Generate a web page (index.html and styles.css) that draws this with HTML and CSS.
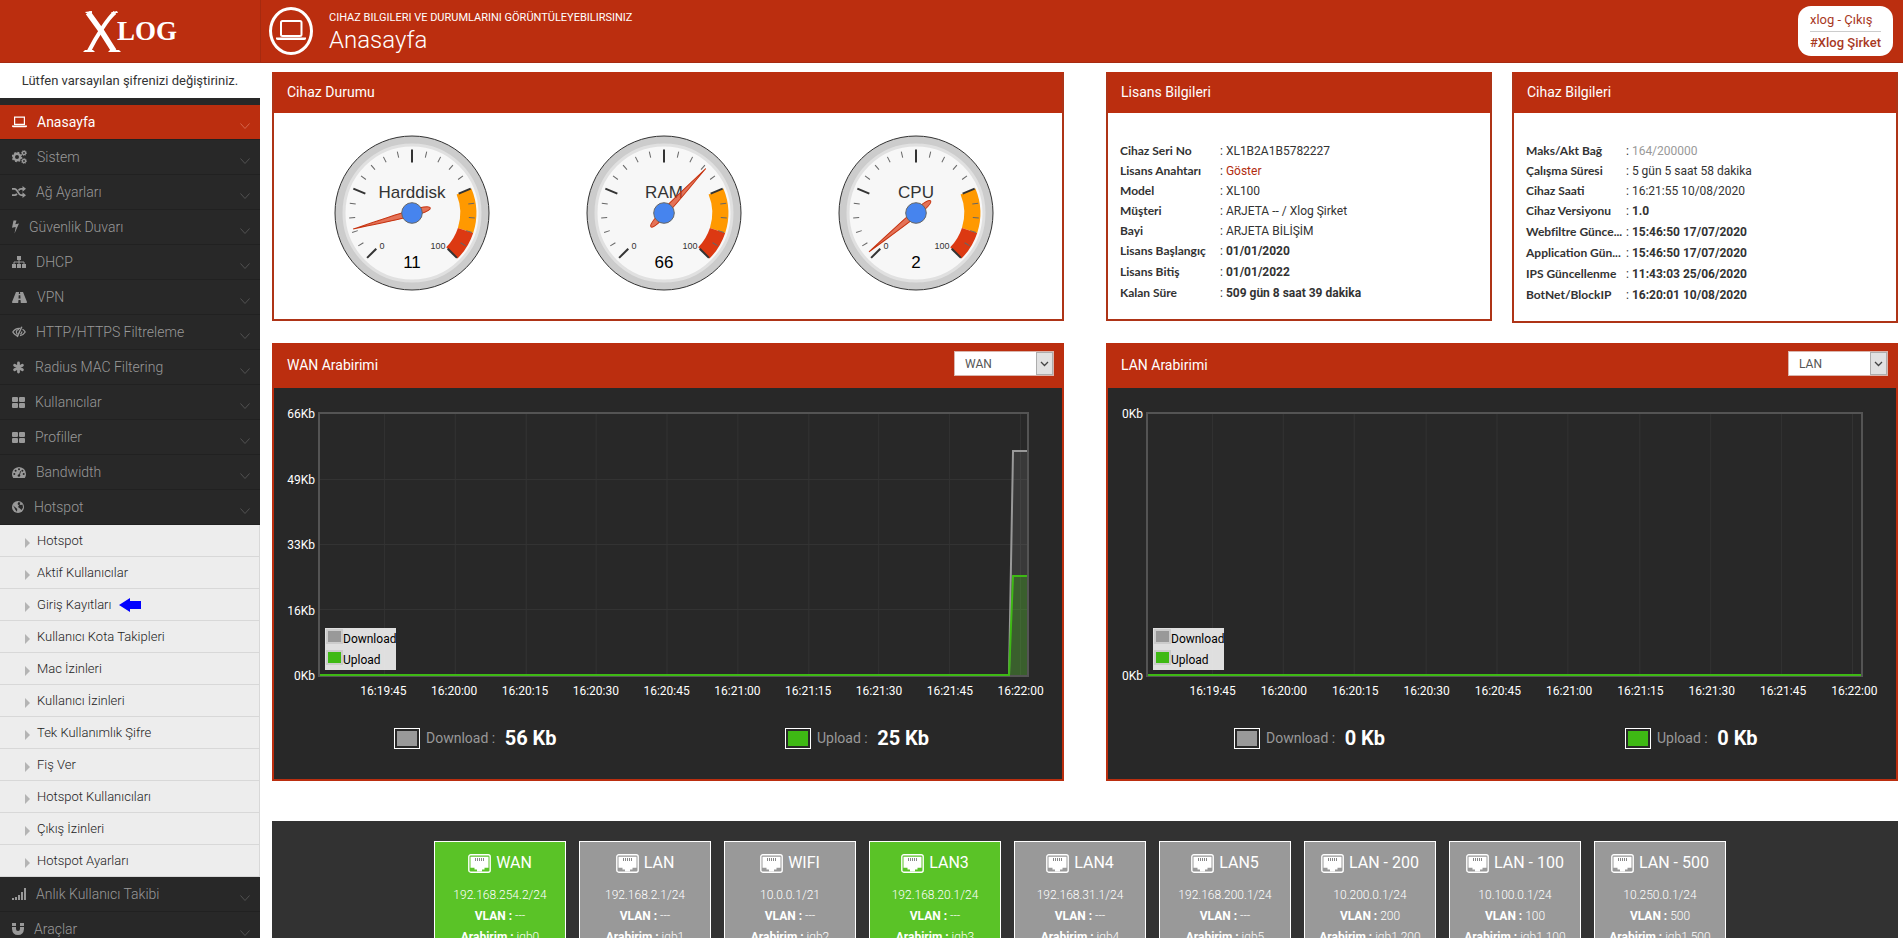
FILE: index.html
```html
<!DOCTYPE html>
<html lang="tr">
<head>
<meta charset="utf-8">
<title>Xlog - Anasayfa</title>
<link rel="stylesheet" href="styles.css">
</head>
<body>
<svg class="defs" width="0" height="0" aria-hidden="true">
  <defs>
    <g id="minor" stroke="#666" stroke-width="1">
      <path d="M0-63V-57" transform="rotate(13.5)"/><path d="M0-63V-57" transform="rotate(27)"/>
      <path d="M0-63V-57" transform="rotate(40.5)"/><path d="M0-63V-57" transform="rotate(54)"/>
    </g>
    <g id="face">
      <circle r="77" fill="#ccc" stroke="#333" stroke-width="1"/>
      <circle r="68" fill="#f7f7f7" stroke="#e0e0e0" stroke-width="3"/>
      <path fill="#ff9900" d="M59.4-24.6A64.3 64.3 0 0 1 61.2 19.9L45.9 14.9A48.3 48.3 0 0 0 44.6-18.5Z"/>
      <path fill="#dc3912" d="M61.2 19.9A64.3 64.3 0 0 1 45.5 45.5L34.2 34.2A48.3 48.3 0 0 0 45.9 14.9Z"/>
      <use href="#minor" transform="rotate(-135)"/><use href="#minor" transform="rotate(-67.5)"/>
      <use href="#minor"/><use href="#minor" transform="rotate(67.5)"/>
      <g stroke="#333" stroke-width="2">
        <path d="M0-63.5V-50.5" transform="rotate(-135)"/><path d="M0-63.5V-50.5" transform="rotate(-67.5)"/>
        <path d="M0-63.5V-50.5"/><path d="M0-63.5V-50.5" transform="rotate(67.5)"/>
        <path d="M0-63.5V-50.5" transform="rotate(135)"/>
      </g>
    </g>
    <path id="needle" d="M0-61C1-40 3.5-10 3 8Q2.5 19 0 19Q-2.5 19-3 8C-3.5-10-1-40 0-61Z" fill="#dc3912" fill-opacity=".7" stroke="#c63310"/>
    <circle id="hub" r="10.3" fill="#4684ee" stroke="#666"/>
    <symbol id="chev" viewBox="0 0 10 7"><path d="M.5.5L5 5.5L9.5.5" fill="none" stroke="currentColor" stroke-width="1"/></symbol>
    <symbol id="drop" viewBox="0 0 17 23"><rect x=".5" y=".5" width="16" height="22" fill="#e1e1e1" stroke="#adadad"/><path d="M5 10l3.500 3.500L12 10" fill="none" stroke="#444" stroke-width="1.300"/></symbol>
    <symbol id="jack" viewBox="0 0 23 19">
      <rect x=".8" y=".8" width="21.400" height="17.400" rx="2" fill="none" stroke="#fff" stroke-width="1.400"/>
      <path fill="#fff" d="M2.500 2.800h18v11h-4V15.500h-2.500v2h-5v-2H6.500V13.800h-4z"/>
      <path stroke="#888" stroke-width="1" d="M7.500 4v3M9.500 4v3M11.500 4v3M13.500 4v3M15.500 4v3"/>
    </symbol>
    <symbol id="laptop" viewBox="0 0 15 12"><path fill="none" stroke="currentColor" stroke-width="1.200" d="M2.600 1.100h9.800v7.300H2.600z"/><path fill="currentColor" d="M0 9.500h15v.7q0 1-1.200 1H1.200Q0 11.200 0 10.200z"/></symbol>
  </defs>
</svg>

<header class="topbar">
  <a class="brand" href="#" aria-label="Xlog">
    <svg class="brand-x" viewBox="0 0 38 41" aria-hidden="true"><path fill="none" stroke="#fff" stroke-width="5.500" d="M5 1.500C10 8 24 28 31 40"/><path fill="none" stroke="#fff" stroke-width="4" d="M32 1.500C25 7 13 26 6 40"/><path fill="#fff" d="M2 1l7-1v2H3zM28 1.500L34 0l1 2h-7zM0 41l2-2h8l2 2zM25 41l2-2h9l2 2z"/></svg>
    <span class="brand-text">LOG</span>
  </a>
  <div class="page-title">
    <span class="page-icon"><svg width="30" height="22" viewBox="0 0 30 22" aria-hidden="true"><rect x="5" y="1" width="20.500" height="15" rx="1.500" fill="none" stroke="#fff" stroke-width="2"/><path fill="#fff" d="M0 17.500h30v1q0 1.500-2 1.500H2q-2 0-2-1.500z"/></svg></span>
    <div>
      <p class="page-sub">CIHAZ BILGILERI VE DURUMLARINI GÖRÜNTÜLEYEBILIRSINIZ</p>
      <h1>Anasayfa</h1>
    </div>
  </div>
  <div class="user-box"><a href="#">xlog - Çıkış</a><a href="#" class="company">#Xlog Şirket</a></div>
</header>

<div class="layout">
<aside class="sidebar">
  <p class="warn">Lütfen varsayılan şifrenizi değiştiriniz.</p>
  <nav class="menu">
    <a class="item active" href="#"><svg width="15" height="12"><use href="#laptop"/></svg>Anasayfa<svg class="chev"><use href="#chev"/></svg></a>
    <a class="item" href="#"><svg width="15" height="14" viewBox="0 0 15 14"><circle cx="5" cy="7" r="3.200" fill="none" stroke="currentColor" stroke-width="2.400"/><circle cx="5" cy="7" r="4.600" fill="none" stroke="currentColor" stroke-width="1.400" stroke-dasharray="1.800 1.810"/><g fill="none" stroke="currentColor"><circle cx="12" cy="3" r="1.600" stroke-width="1.400"/><circle cx="12" cy="3" r="2.600" stroke-width=".8" stroke-dasharray="1.100 .94"/><circle cx="12" cy="11" r="1.600" stroke-width="1.400"/><circle cx="12" cy="11" r="2.600" stroke-width=".8" stroke-dasharray="1.100 .94"/></g></svg>Sistem<svg class="chev"><use href="#chev"/></svg></a>
    <a class="item" href="#"><svg width="14" height="12" viewBox="0 0 14 12"><path fill="none" stroke="currentColor" stroke-width="1.800" d="M0 2.800h2.500C6 2.800 6 9.200 9 9.200h2M0 9.200h2.500q1.500 0 2.400-1.500M6.500 4.500Q7.500 2.800 9 2.800h2"/><path fill="currentColor" d="M10.500 0L14 2.800l-3.500 2.900zM10.500 6.300L14 9.200 10.500 12z"/></svg>Ağ Ayarları<svg class="chev"><use href="#chev"/></svg></a>
    <a class="item" href="#"><svg width="7" height="14" viewBox="0 0 7 14"><path fill="currentColor" d="M1.500.5h3L3.300 4.300 7 3.500 2.500 13.500l1.200-6.600L0 7.700z"/></svg>Güvenlik Duvarı<svg class="chev"><use href="#chev"/></svg></a>
    <a class="item" href="#"><svg width="14" height="12" viewBox="0 0 14 12"><path fill="currentColor" d="M5 0h4v4H5zM0 8h4v4H0zM5 8h4v4H5zM10 8h4v4h-4z"/><path fill="none" stroke="currentColor" stroke-width="1" d="M7 4v4M2 8V6h10v2"/></svg>DHCP<svg class="chev"><use href="#chev"/></svg></a>
    <a class="item" href="#"><svg width="15" height="11" viewBox="0 0 15 11"><path fill="currentColor" fill-rule="evenodd" d="M4 0h3l-.2 2h1.400L8 0h3l4 10q.2 1-.8 1H8.800L8.500 8h-2l-.3 3H.8Q-.2 11 0 10zM6.700 3.200l-.2 3.300h2l-.2-3.300z"/></svg>VPN<svg class="chev"><use href="#chev"/></svg></a>
    <a class="item" href="#"><svg width="14" height="12" viewBox="0 0 14 12"><g fill="none" stroke="currentColor"><path stroke-width="1.300" d="M6 9.800Q3 9.500 .8 6 3 2.500 7 2.300l1.200.1M10.500 3.300Q12.200 4.300 13.200 6 11.500 9 8 9.700"/><path stroke-width="1.500" d="M9.800.8L5.200 11"/><path stroke-width="1.200" d="M7 3.500Q4.400 3.700 4.300 6q.1 1.400 1.200 2.200M9.900 5.500q0 1.800-1.500 2.700"/></g></svg>HTTP/HTTPS Filtreleme<svg class="chev"><use href="#chev"/></svg></a>
    <a class="item" href="#"><svg width="13" height="13" viewBox="0 0 13 13"><path stroke="currentColor" stroke-width="2.800" stroke-linecap="round" d="M6.500 2v9M2.600 4.300l7.800 4.500M2.600 8.800l7.800-4.500"/></svg>Radius MAC Filtering<svg class="chev"><use href="#chev"/></svg></a>
    <a class="item" href="#"><svg width="13" height="11" viewBox="0 0 13 11"><g fill="currentColor"><rect width="6" height="5" rx="1"/><rect x="7" width="6" height="5" rx="1"/><rect y="6" width="6" height="5" rx="1"/><rect x="7" y="6" width="6" height="5" rx="1"/></g></svg>Kullanıcılar<svg class="chev"><use href="#chev"/></svg></a>
    <a class="item" href="#"><svg width="13" height="11" viewBox="0 0 13 11"><g fill="currentColor"><rect width="6" height="5" rx="1"/><rect x="7" width="6" height="5" rx="1"/><rect y="6" width="6" height="5" rx="1"/><rect x="7" y="6" width="6" height="5" rx="1"/></g></svg>Profiller<svg class="chev"><use href="#chev"/></svg></a>
    <a class="item" href="#"><svg width="14" height="11" viewBox="0 0 14 11"><path fill="currentColor" d="M1.200 11Q0 9.300 0 7 .5.500 7 0q6.500.5 7 7 0 2.300-1.200 4z"/><g fill="#282828"><circle cx="2.300" cy="7" r="1"/><circle cx="3.600" cy="3.700" r="1"/><circle cx="7" cy="2.200" r="1"/><circle cx="10.400" cy="3.700" r="1"/><circle cx="11.700" cy="7" r="1"/><path d="M8.200 4l.8.200-1 3.300q1 1.500-.6 2.200-2 .2-1.800-1.500.4-1 1.600-1z"/></g></svg>Bandwidth<svg class="chev"><use href="#chev"/></svg></a>
    <a class="item" href="#"><svg width="12" height="12" viewBox="0 0 12 12"><circle cx="6" cy="6" r="6" fill="currentColor"/><path fill="#282828" d="M6.500 1l2 .8-1 1.700L9 4l1.500-.5.500 3L9.500 9 8 7.500 6 6l1-1.500L5.500 3zM1.200 4.500l3 2.500 1 1L5 10.800 3.500 9z"/></svg>Hotspot<svg class="chev"><use href="#chev"/></svg></a>
    <div class="submenu">
      <a href="#">Hotspot</a>
      <a href="#">Aktif Kullanıcılar</a>
      <a href="#">Giriş Kayıtları<svg class="pointer" width="22" height="14" viewBox="0 0 22 14"><path fill="#0000fe" d="M0 7L11 0v3h11v8H11v3z"/></svg></a>
      <a href="#">Kullanıcı Kota Takipleri</a>
      <a href="#">Mac İzinleri</a>
      <a href="#">Kullanıcı İzinleri</a>
      <a href="#">Tek Kullanımlık Şifre</a>
      <a href="#">Fiş Ver</a>
      <a href="#">Hotspot Kullanıcıları</a>
      <a href="#">Çıkış İzinleri</a>
      <a href="#">Hotspot Ayarları</a>
    </div>
    <a class="item" href="#"><svg width="14" height="12" viewBox="0 0 14 12"><path fill="currentColor" d="M0 10h2v2H0zM3 9h2v3H3zM6 7h2v5H6zM9 4h2v8H9zM12 0h2v12h-2z"/></svg>Anlık Kullanıcı Takibi<svg class="chev"><use href="#chev"/></svg></a>
    <a class="item" href="#"><svg width="12" height="12" viewBox="0 0 12 12"><path fill="currentColor" d="M0 0h4v3H0zM8 0h4v3H8zM0 4h4v2q0 2 2 2t2-2V4h4v2q-.5 6-6 6T0 6z"/></svg>Araçlar<svg class="chev"><use href="#chev"/></svg></a>
  </nav>
</aside>

<main class="content">
  <section class="row">
    <article class="panel">
      <h2>Cihaz Durumu</h2>
      <div class="gauges">
        <svg class="gauge" viewBox="-78 -78 156 156"><use href="#face"/><text class="g-title" y="-15">Harddisk</text><text class="g-end" x="-30" y="36">0</text><text class="g-end" x="26" y="36">100</text><text class="g-value" y="55">11</text><use href="#needle" transform="rotate(-105.300)"/><use href="#hub"/></svg>
        <svg class="gauge" viewBox="-78 -78 156 156"><use href="#face"/><text class="g-title" y="-15">RAM</text><text class="g-end" x="-30" y="36">0</text><text class="g-end" x="26" y="36">100</text><text class="g-value" y="55">66</text><use href="#needle" transform="rotate(43.200)"/><use href="#hub"/></svg>
        <svg class="gauge" viewBox="-78 -78 156 156"><use href="#face"/><text class="g-title" y="-15">CPU</text><text class="g-end" x="-30" y="36">0</text><text class="g-end" x="26" y="36">100</text><text class="g-value" y="55">2</text><use href="#needle" transform="rotate(-129.600)"/><use href="#hub"/></svg>
      </div>
    </article>
    <div class="pair">
      <article class="panel">
        <h2>Lisans Bilgileri</h2>
        <dl class="info">
          <dt>Cihaz Seri No</dt><dd>XL1B2A1B5782227</dd>
          <dt>Lisans Anahtarı</dt><dd><a href="#">Göster</a></dd>
          <dt>Model</dt><dd>XL100</dd>
          <dt>Müşteri</dt><dd>ARJETA -- / Xlog Şirket</dd>
          <dt>Bayi</dt><dd>ARJETA BİLİŞİM</dd>
          <dt>Lisans Başlangıç</dt><dd class="strong">01/01/2020</dd>
          <dt>Lisans Bitiş</dt><dd class="strong">01/01/2022</dd>
          <dt>Kalan Süre</dt><dd class="strong">509 gün 8 saat 39 dakika</dd>
        </dl>
      </article>
      <article class="panel">
        <h2>Cihaz Bilgileri</h2>
        <dl class="info">
          <dt>Maks/Akt Bağ</dt><dd><span class="dim">164/200000</span></dd>
          <dt>Çalışma Süresi</dt><dd>5 gün 5 saat 58 dakika</dd>
          <dt>Cihaz Saati</dt><dd>16:21:55 10/08/2020</dd>
          <dt>Cihaz Versiyonu</dt><dd class="strong">1.0</dd>
          <dt>Webfiltre Günce...</dt><dd class="strong">15:46:50 17/07/2020</dd>
          <dt>Application Gün...</dt><dd class="strong">15:46:50 17/07/2020</dd>
          <dt>IPS Güncellenme</dt><dd class="strong">11:43:03 25/06/2020</dd>
          <dt>BotNet/BlockIP</dt><dd class="strong">16:20:01 10/08/2020</dd>
        </dl>
      </article>
    </div>
  </section>

  <section class="row row-charts">
    <article class="panel dark wan">
      <div class="panel-head"><h2>WAN Arabirimi</h2><label class="pick"><select aria-label="WAN Arabirimi"><option>WAN</option></select><svg width="17" height="23"><use href="#drop"/></svg></label></div>
      <div class="chart">
        <div class="y-axis"><span>66Kb</span><span>49Kb</span><span>33Kb</span><span>16Kb</span><span>0Kb</span></div>
        <div class="plot">
          <svg class="lines" viewBox="0 0 708 261" preserveAspectRatio="none">
            <path class="grid" d="M64.500 0V261M135.500 0V261M206.500 0V261M276.500 0V261M347.500 0V261M418.500 0V261M489.500 0V261M559.500 0V261M630.500 0V261M701.500 0V261M0 65.500H708M0 130.500H708M0 195.500H708"/>
            <path fill="#999" fill-opacity=".15" d="M690 261L694 37H708V261Z"/>
            <path class="line" stroke="#999" d="M0 261H690L694 37H708"/>
            <path fill="#3eb914" fill-opacity=".3" d="M690 261L694 162H708V261Z"/>
            <path class="line" stroke="#3eb914" d="M0 261H690L694 162H708"/>
          </svg>
          <ul class="legend"><li><i class="sw"></i>Download</li><li><i class="sw up"></i>Upload</li></ul>
        </div>
        <div class="x-axis"><span>16:19:45</span><span>16:20:00</span><span>16:20:15</span><span>16:20:30</span><span>16:20:45</span><span>16:21:00</span><span>16:21:15</span><span>16:21:30</span><span>16:21:45</span><span>16:22:00</span></div>
      </div>
      <div class="totals"><div><i class="box"></i>Download : <b>56 Kb</b></div><div><i class="box up"></i>Upload : <b>25 Kb</b></div></div>
    </article>
    <article class="panel dark lan">
      <div class="panel-head"><h2>LAN Arabirimi</h2><label class="pick"><select aria-label="LAN Arabirimi"><option>LAN</option></select><svg width="17" height="23"><use href="#drop"/></svg></label></div>
      <div class="chart">
        <div class="y-axis"><span>0Kb</span><span>0Kb</span></div>
        <div class="plot">
          <svg class="lines" viewBox="0 0 714 261" preserveAspectRatio="none">
            <path class="grid" d="M64.500 0V261M135.500 0V261M206.500 0V261M278.500 0V261M349.500 0V261M420.500 0V261M492.500 0V261M563.500 0V261M634.500 0V261M705.500 0V261"/>
            <path class="line" stroke="#3eb914" d="M0 261H714"/>
          </svg>
          <ul class="legend"><li><i class="sw"></i>Download</li><li><i class="sw up"></i>Upload</li></ul>
        </div>
        <div class="x-axis"><span>16:19:45</span><span>16:20:00</span><span>16:20:15</span><span>16:20:30</span><span>16:20:45</span><span>16:21:00</span><span>16:21:15</span><span>16:21:30</span><span>16:21:45</span><span>16:22:00</span></div>
      </div>
      <div class="totals"><div><i class="box"></i>Download : <b>0 Kb</b></div><div><i class="box up"></i>Upload : <b>0 Kb</b></div></div>
    </article>
  </section>

  <section class="ports">
    <article class="port on"><h3><svg><use href="#jack"/></svg>WAN</h3><p>192.168.254.2/24</p><p><b>VLAN :</b> ---</p><p><b>Arabirim :</b> igb0</p></article>
    <article class="port"><h3><svg><use href="#jack"/></svg>LAN</h3><p>192.168.2.1/24</p><p><b>VLAN :</b> ---</p><p><b>Arabirim :</b> igb1</p></article>
    <article class="port"><h3><svg><use href="#jack"/></svg>WIFI</h3><p>10.0.0.1/21</p><p><b>VLAN :</b> ---</p><p><b>Arabirim :</b> igb2</p></article>
    <article class="port on"><h3><svg><use href="#jack"/></svg>LAN3</h3><p>192.168.20.1/24</p><p><b>VLAN :</b> ---</p><p><b>Arabirim :</b> igb3</p></article>
    <article class="port"><h3><svg><use href="#jack"/></svg>LAN4</h3><p>192.168.31.1/24</p><p><b>VLAN :</b> ---</p><p><b>Arabirim :</b> igb4</p></article>
    <article class="port"><h3><svg><use href="#jack"/></svg>LAN5</h3><p>192.168.200.1/24</p><p><b>VLAN :</b> ---</p><p><b>Arabirim :</b> igb5</p></article>
    <article class="port"><h3><svg><use href="#jack"/></svg>LAN - 200</h3><p>10.200.0.1/24</p><p><b>VLAN :</b> 200</p><p><b>Arabirim :</b> igb1.200</p></article>
    <article class="port"><h3><svg><use href="#jack"/></svg>LAN - 100</h3><p>10.100.0.1/24</p><p><b>VLAN :</b> 100</p><p><b>Arabirim :</b> igb1.100</p></article>
    <article class="port"><h3><svg><use href="#jack"/></svg>LAN - 500</h3><p>10.250.0.1/24</p><p><b>VLAN :</b> 500</p><p><b>Arabirim :</b> igb1.500</p></article>
  </section>
</main>
</div>
</body>
</html>
```

FILE: styles.css
```css
* { box-sizing: border-box; margin: 0; padding: 0; }
body {
  height: 100vh;
  overflow: hidden;
  background: #fff;
  color: #333;
  font: 12px/20px Roboto, "Liberation Sans", sans-serif;
}
a { color: inherit; text-decoration: none; }
ul { list-style: none; }
.defs { position: absolute; }

/* top bar */
.topbar {
  display: flex;
  align-items: center;
  height: 63px;
  background: #bb2e0f;
  border-bottom: 1px solid #a62a10;
  color: #fff;
}
.brand {
  display: flex;
  align-items: center;
  justify-content: center;
  flex: 0 0 261px;
  height: 62px;
  border-right: 1px solid #a62a10;
}
.brand-x { width: 38px; height: 41px; }
.brand-text { font: bold 27px/30px "Liberation Serif", serif; margin-left: -4px; }
.page-title { display: flex; align-items: center; gap: 16px; flex: 1; padding-left: 8px; }
.page-icon {
  display: flex;
  align-items: center;
  justify-content: center;
  width: 44px;
  height: 48px;
  border: 3px solid #fff;
  border-radius: 50%;
}
.page-sub { padding-top: 2px; font-size: 11px; line-height: 16px; }
h1 { font-size: 24px; font-weight: 300; line-height: 28px; }
.user-box {
  margin-right: 10px;
  padding: 3px 12px 2px;
  border-radius: 13px;
  background: #fff;
  color: #a8391f;
  font-size: 13px;
}
.user-box a { display: block; line-height: 22px; }
.user-box .company { border-top: 1px solid #ccc; font-weight: 500; }

.layout { display: flex; align-items: flex-start; }

/* side menu */
.sidebar { flex: 0 0 260px; background: #282828; }
.warn {
  height: 35px;
  background: #fff;
  font-size: 13px;
  line-height: 35px;
  text-align: center;
}
.menu { padding-top: 7px; }
.item {
  display: flex;
  align-items: center;
  gap: 10px;
  height: 35px;
  padding: 0 10px 0 12px;
  border-bottom: 1px solid #212121;
  color: #999;
  font-size: 14px;
  font-weight: 300;
}
.item.active { background: #bb2e0f; color: #fff; font-weight: 400; }
.item svg { flex: none; }
.item .chev { width: 10px; height: 7px; margin: 8px 0 0 auto; color: #505050; }
.item.active .chev { color: #d4664c; }
.submenu { background: #ededed; border-right: 1px solid #d8d8d8; }
.submenu a {
  display: flex;
  align-items: center;
  height: 32px;
  padding-left: 25px;
  border-bottom: 1px solid #d8d8d8;
  color: #222;
  font-size: 13px;
  font-weight: 300;
}
.submenu a::before {
  content: "";
  margin: 4px 7px 0 0;
  border: 5px solid transparent;
  border-left-color: #b4b4b4;
  border-right: 0;
}
.submenu .pointer { margin-left: 8px; }

/* content */
.content { flex: 1; min-width: 0; padding: 9px 5px 0 12px; }
.row { display: grid; grid-template-columns: 1fr 1fr; gap: 42px; align-items: start; }
.pair { display: grid; grid-template-columns: 1fr 1fr; gap: 20px; align-items: start; }
.row-charts { margin-top: 20px; }
.panel { min-width: 0; border: 2px solid #ae3417; border-top-color: #bb2e0f; }
.panel h2 {
  padding-left: 13px;
  background: #bb2e0f;
  color: #fff;
  font-size: 14px;
  font-weight: 400;
  line-height: 37px;
  height: 39px;
}

.gauges { display: flex; justify-content: center; gap: 96px; height: 206px; padding: 22px 9px 0 0; }
.gauge { width: 156px; height: 156px; }
.gauge text { text-anchor: middle; font-family: "Liberation Sans", sans-serif; }
.g-title { font-size: 17px; fill: #333; }
.g-value { font-size: 17px; fill: #000; }
.g-end { font-size: 9px; fill: #333; }

.info { display: grid; grid-template-columns: 100px 1fr; padding: 28px 12px 15px; }
.info dt {
  white-space: nowrap;
  font-family: Lato, sans-serif;
  font-weight: 700;
}
.info dd::before { content: ": "; font-weight: 400; }
.info .strong { font-weight: 700; line-height: 21px; }
.info a { color: #b12c10; }
.dim { color: #999; }

/* traffic charts */
.dark { background: #282828; border-color: #bb2e0f; }
.panel-head { display: flex; justify-content: space-between; background: #bb2e0f; height: 43px; padding: 6px 8px 0 0; }
.panel-head h2 { line-height: 29px; height: 29px; }
.pick { position: relative; height: 25px; }
.pick select {
  appearance: none;
  display: block;
  width: 100px;
  height: 25px;
  padding-left: 10px;
  border: 1px solid #d9b5ad;
  border-radius: 0;
  background: #fff;
  color: #555;
  font: 12px Roboto, sans-serif;
}
.pick svg { position: absolute; top: 1px; right: 1px; pointer-events: none; }

.chart {
  display: grid;
  grid-template-columns: 41px 1fr;
  column-gap: 3px;
  padding: 24px 33px 0 0;
  color: #fff;
}
.lan .chart { grid-template-columns: 35px 1fr; }
.y-axis { display: flex; flex-direction: column; justify-content: space-between; margin: -8px 0 -9px; text-align: right; }
.plot { position: relative; height: 265px; border: 2px solid #545454; }
.lines { display: block; width: 100%; height: 100%; overflow: visible; }
.grid { stroke: #333; fill: none; }
.line { fill: none; stroke-width: 2; vector-effect: non-scaling-stroke; }
.x-axis { grid-column: 2; display: grid; grid-template-columns: repeat(10, 1fr); margin: 4px -27px 0 30px; text-align: center; }
.lan .x-axis { margin: 4px -27px 0 31px; }
.legend { position: absolute; left: 5px; bottom: 5px; width: 71px; background: rgba(255, 255, 255, .85); color: #000; }
.legend li { display: flex; height: 21px; line-height: 22px; }
.sw { width: 17px; height: 15px; margin: 1px 0 0 1px; border: 2px solid #ccc; background: #999; flex: none; }
.sw.up { background: #3eb914; }
.totals { display: flex; height: 78px; padding: 27px 6px 0 0; color: #999; font-size: 14px; }
.lan .totals { padding: 27px 0 0 6px; }
.totals div { flex: 0 0 50%; display: flex; height: 21px; gap: 6px; padding-left: 120px; line-height: 21px; white-space: pre; }
.totals b { font-size: 20px; font-weight: 700; color: #fff; }
.box { width: 26px; height: 21px; padding: 2px; border: 1px solid #fff; background: #999 content-box; }
.box.up { background: #3eb914 content-box; }

/* ports */
.ports { display: flex; justify-content: center; gap: 13px; margin-top: 40px; padding: 20px 10px 20px 0; background: #323232; }
.port { width: 132px; padding: 9px 0 20px; border: 1px solid #fff; background: #999; color: #fff; text-align: center; font-weight: 300; }
.port.on { background: #5ac327; }
.port h3 { display: flex; align-items: center; justify-content: center; gap: 5px; height: 24px; margin-bottom: 10px; font-size: 16px; font-weight: 400; }
.port h3 svg { width: 23px; height: 19px; }
.port p { line-height: 21px; }
.port b { font-weight: 700; }
```
